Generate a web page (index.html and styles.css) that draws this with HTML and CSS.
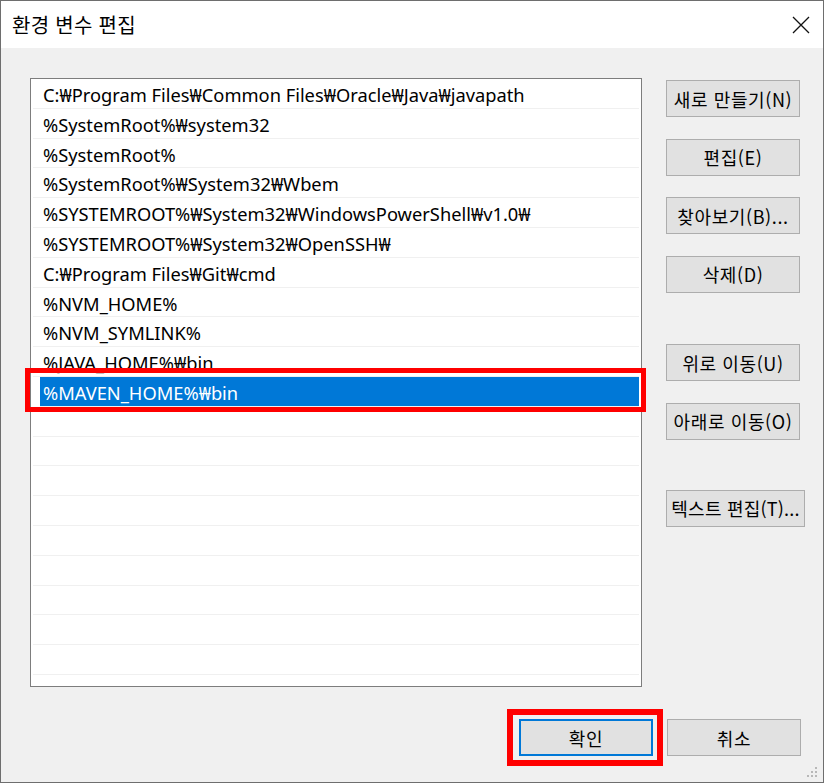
FILE: index.html
```html
<!DOCTYPE html>
<html lang="ko">
<head>
<meta charset="utf-8">
<title>환경 변수 편집</title>
<link rel="stylesheet" href="styles.css">
</head>
<body>
<div class="window">
  <div class="titlebar">
    <span class="title">환경 변수 편집</span>
    <span class="close" aria-label="닫기">
      <svg width="18" height="18" viewBox="0 0 18 18"><path d="M1 1 L17 17 M17 1 L1 17" stroke="#111" stroke-width="1.3" fill="none"/></svg>
    </span>
  </div>
  <div class="content">
    <div class="main">
      <div class="list">
        <div class="row">C:₩Program Files₩Common Files₩Oracle₩Java₩javapath</div>
        <div class="row">%SystemRoot%₩system32</div>
        <div class="row">%SystemRoot%</div>
        <div class="row">%SystemRoot%₩System32₩Wbem</div>
        <div class="row">%SYSTEMROOT%₩System32₩WindowsPowerShell₩v1.0₩</div>
        <div class="row">%SYSTEMROOT%₩System32₩OpenSSH₩</div>
        <div class="row">C:₩Program Files₩Git₩cmd</div>
        <div class="row">%NVM_HOME%</div>
        <div class="row">%NVM_SYMLINK%</div>
        <div class="row">%JAVA_HOME%₩bin</div>
        <div class="row selected">%MAVEN_HOME%₩bin</div>
        <div class="row"></div>
        <div class="row"></div>
        <div class="row"></div>
        <div class="row"></div>
        <div class="row"></div>
        <div class="row"></div>
        <div class="row"></div>
        <div class="row"></div>
        <div class="row"></div>
      </div>
      <div class="side">
        <button class="btn">새로 만들기(N)</button>
        <button class="btn">편집(E)</button>
        <button class="btn">찾아보기(B)...</button>
        <button class="btn">삭제(D)</button>
        <button class="btn group">위로 이동(U)</button>
        <button class="btn">아래로 이동(O)</button>
        <button class="btn group2 wide">텍스트 편집(T)...</button>
      </div>
    </div>
    <div class="footer">
      <button class="btn default">확인</button>
      <button class="btn">취소</button>
    </div>
  </div>
  <span class="grip">
    <svg width="12" height="12" viewBox="0 0 12 12" fill="#b8b8b8">
      <rect x="9" y="1" width="2" height="2"/>
      <rect x="5" y="5" width="2" height="2"/><rect x="9" y="5" width="2" height="2"/>
      <rect x="1" y="9" width="2" height="2"/><rect x="5" y="9" width="2" height="2"/><rect x="9" y="9" width="2" height="2"/>
    </svg>
  </span>
</div>
</body>
</html>
```
FILE: styles.css
```css
* { box-sizing: border-box; }
html, body { margin: 0; padding: 0; }
body {
  background: #f0f0f0;
  font-family: "Noto Sans", "Noto Sans CJK KR", sans-serif;
  color: #000;
}
.window {
  position: relative;
  width: 824px;
  height: 783px;
  border: 1px solid #6e6e6e;
  background: #f0f0f0;
  display: flex;
  flex-direction: column;
}
.titlebar {
  height: 47px;
  background: #fff;
  display: flex;
  align-items: center;
  justify-content: space-between;
  padding: 0 13px 0 11px;
}
.title {
  font-family: "Noto Sans CJK KR", sans-serif;
  font-size: 20px;
  letter-spacing: 0.3px;
}
.close { display: flex; }
.content {
  padding: 30px 0 0 29px;
  display: flex;
  flex-direction: column;
}
.main {
  display: flex;
  gap: 24px;
  align-items: flex-start;
}
.list {
  width: 612px;
  height: 609px;
  border: 1px solid #7d7d7d;
  background: #fff;
}
.row {
  position: relative;
  height: 29.8px;
  margin: 0 2px 0 2px;
  padding: 4px 0 0 10px;
  line-height: 24.8px;
  font-size: 18.3px;
  white-space: nowrap;
  border-bottom: 1px solid #f0f0f0;
}
.row.selected {
  margin-left: 9px;
  padding-left: 3px;
  background: #0078d7;
  color: #fff;
}
.row.selected::after {
  content: "";
  position: absolute;
  left: -15px;
  right: -7px;
  top: -9px;
  bottom: -6px;
  border: 5px solid #f00;
}
.side {
  width: 134px;
  padding-top: 2px;
  display: flex;
  flex-direction: column;
  gap: 21.5px;
}
.btn {
  position: relative;
  width: 134px;
  height: 37px;
  padding: 0;
  background: #e1e1e1;
  border: 1px solid #adadad;
  font-family: "Noto Sans CJK KR", sans-serif;
  font-size: 18px;
  letter-spacing: 0.6px;
  color: #000;
  white-space: nowrap;
}
.btn.group { margin-top: 30px; }
.btn.group2 { margin-top: 28.5px; }
.btn.wide { width: 139px; letter-spacing: 0.2px; }
.footer {
  margin-top: 32px;
  padding-right: 22px;
  display: flex;
  justify-content: flex-end;
  gap: 14px;
}
.btn.default {
  border: 2px solid #0078d7;
}
.btn.default::after {
  content: "";
  position: absolute;
  left: -14px;
  right: -12px;
  top: -12px;
  bottom: -12px;
  border: 6px solid #f00;
}
.grip {
  position: absolute;
  right: 5px;
  bottom: 4px;
  display: flex;
}
```
